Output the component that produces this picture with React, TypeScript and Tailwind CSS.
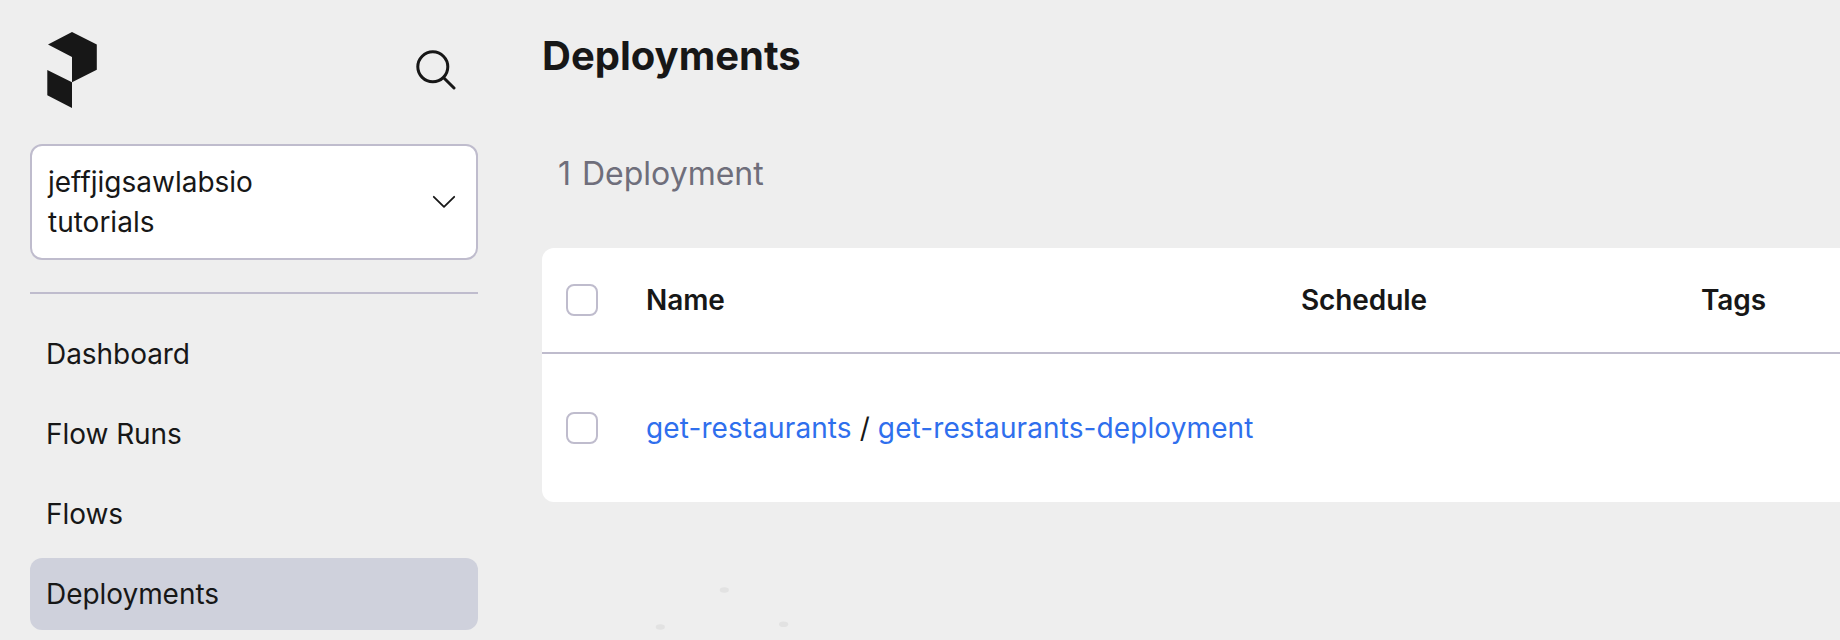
const navItems = [
  { label: 'Dashboard', active: false },
  { label: 'Flow Runs', active: false },
  { label: 'Flows', active: false },
  { label: 'Deployments', active: true },
];

function Logo() {
  return (
    <svg className="h-[76px] w-[50px]" viewBox="0 0 50 76" fill="#171717" aria-hidden="true">
      <path d="M25 0 49.8 12.5V37.8L25 50.3V25L1 12.5ZM.3 38 25 50.3V76L.3 63.3Z" />
    </svg>
  );
}

function SearchIcon() {
  return (
    <svg className="h-10 w-10" viewBox="0 0 40 40" fill="none" stroke="#171717" strokeWidth="3" strokeLinecap="round" aria-hidden="true">
      <circle cx="16.8" cy="16.8" r="15" />
      <path d="M27.7 27.7 38 38" />
    </svg>
  );
}

function Checkbox() {
  return <span role="checkbox" aria-checked="false" className="block size-8 rounded-lg border-2 border-[#bfbccd] bg-white" />;
}

function Sidebar() {
  return (
    <aside className="flex w-[508px] shrink-0 flex-col px-[30px] pt-8">
      <div className="flex h-[76px] items-start justify-between pr-[22px] pl-[17px]">
        <Logo />
        <button className="mt-[18px]" aria-label="Search">
          <SearchIcon />
        </button>
      </div>
      <button className="mt-9 flex h-[116px] items-center justify-between rounded-xl border-2 border-[#bfbccd] bg-white pr-5 pl-4 text-left leading-10">
        <span>
          <span className="block">jeffjigsawlabsio</span>
          <span className="block">tutorials</span>
        </span>
        <svg className="h-6 w-6" viewBox="0 0 24 24" fill="none" stroke="#171717" strokeWidth="1.8" strokeLinecap="round" strokeLinejoin="round" aria-hidden="true">
          <path d="M1.8 6.8 12 16.8 22.2 6.8" />
        </svg>
      </button>
      <hr className="mt-8 border-t-2 border-[#bfbccd]" />
      <nav className="mt-6 flex flex-col gap-2 tracking-[-0.05px]">
        {navItems.map((item) => (
          <a
            key={item.label}
            className={item.active ? 'flex h-[72px] items-center rounded-xl bg-[#cfd1dc] px-4' : 'flex h-[72px] items-center px-4'}
          >
            {item.label}
          </a>
        ))}
      </nav>
    </aside>
  );
}

function DeploymentsTable() {
  return (
    <div className="mt-[50px] h-[254px] rounded-l-xl bg-white">
      <div className="grid h-[106px] grid-cols-[80px_655px_400px_1fr] items-center border-b-2 border-[#bfbccd] pl-6 font-semibold tracking-[-0.1px]">
        <Checkbox />
        <span>Name</span>
        <span>Schedule</span>
        <span>Tags</span>
      </div>
      <div className="grid h-[148px] grid-cols-[80px_1fr] items-center pl-6">
        <Checkbox />
        <span className="tracking-[0.1px] whitespace-nowrap">
          <a className="text-[#2f6fed]">get-restaurants</a> / <a className="text-[#2f6fed]">get-restaurants-deployment</a>
        </span>
      </div>
    </div>
  );
}

export default function App() {
  return (
    <div className="flex h-[640px] w-full overflow-hidden bg-[#eeeeee] font-['Inter',sans-serif] text-[28px] leading-10 text-[#171717]">
      <Sidebar />
      <main className="flex min-w-0 flex-1 flex-col pt-7 pl-[34px]">
        <h1 className="text-[40px] leading-[56px] font-bold">Deployments</h1>
        <p className="mt-[66px] pl-4 text-[32px] leading-[48px] [word-spacing:2px] text-[#6f6e7b]">1 Deployment</p>
        <DeploymentsTable />
        <svg className="mt-[78px] ml-[110px] h-[60px] w-[140px]" viewBox="0 0 140 60" fill="#e2e2e2" aria-hidden="true">
          <ellipse cx="72.3" cy="10" rx="4.6" ry="2.8" />
          <ellipse cx="8.3" cy="47" rx="4.6" ry="2.8" />
          <ellipse cx="131.6" cy="44.2" rx="4.6" ry="2.8" />
        </svg>
      </main>
    </div>
  );
}
